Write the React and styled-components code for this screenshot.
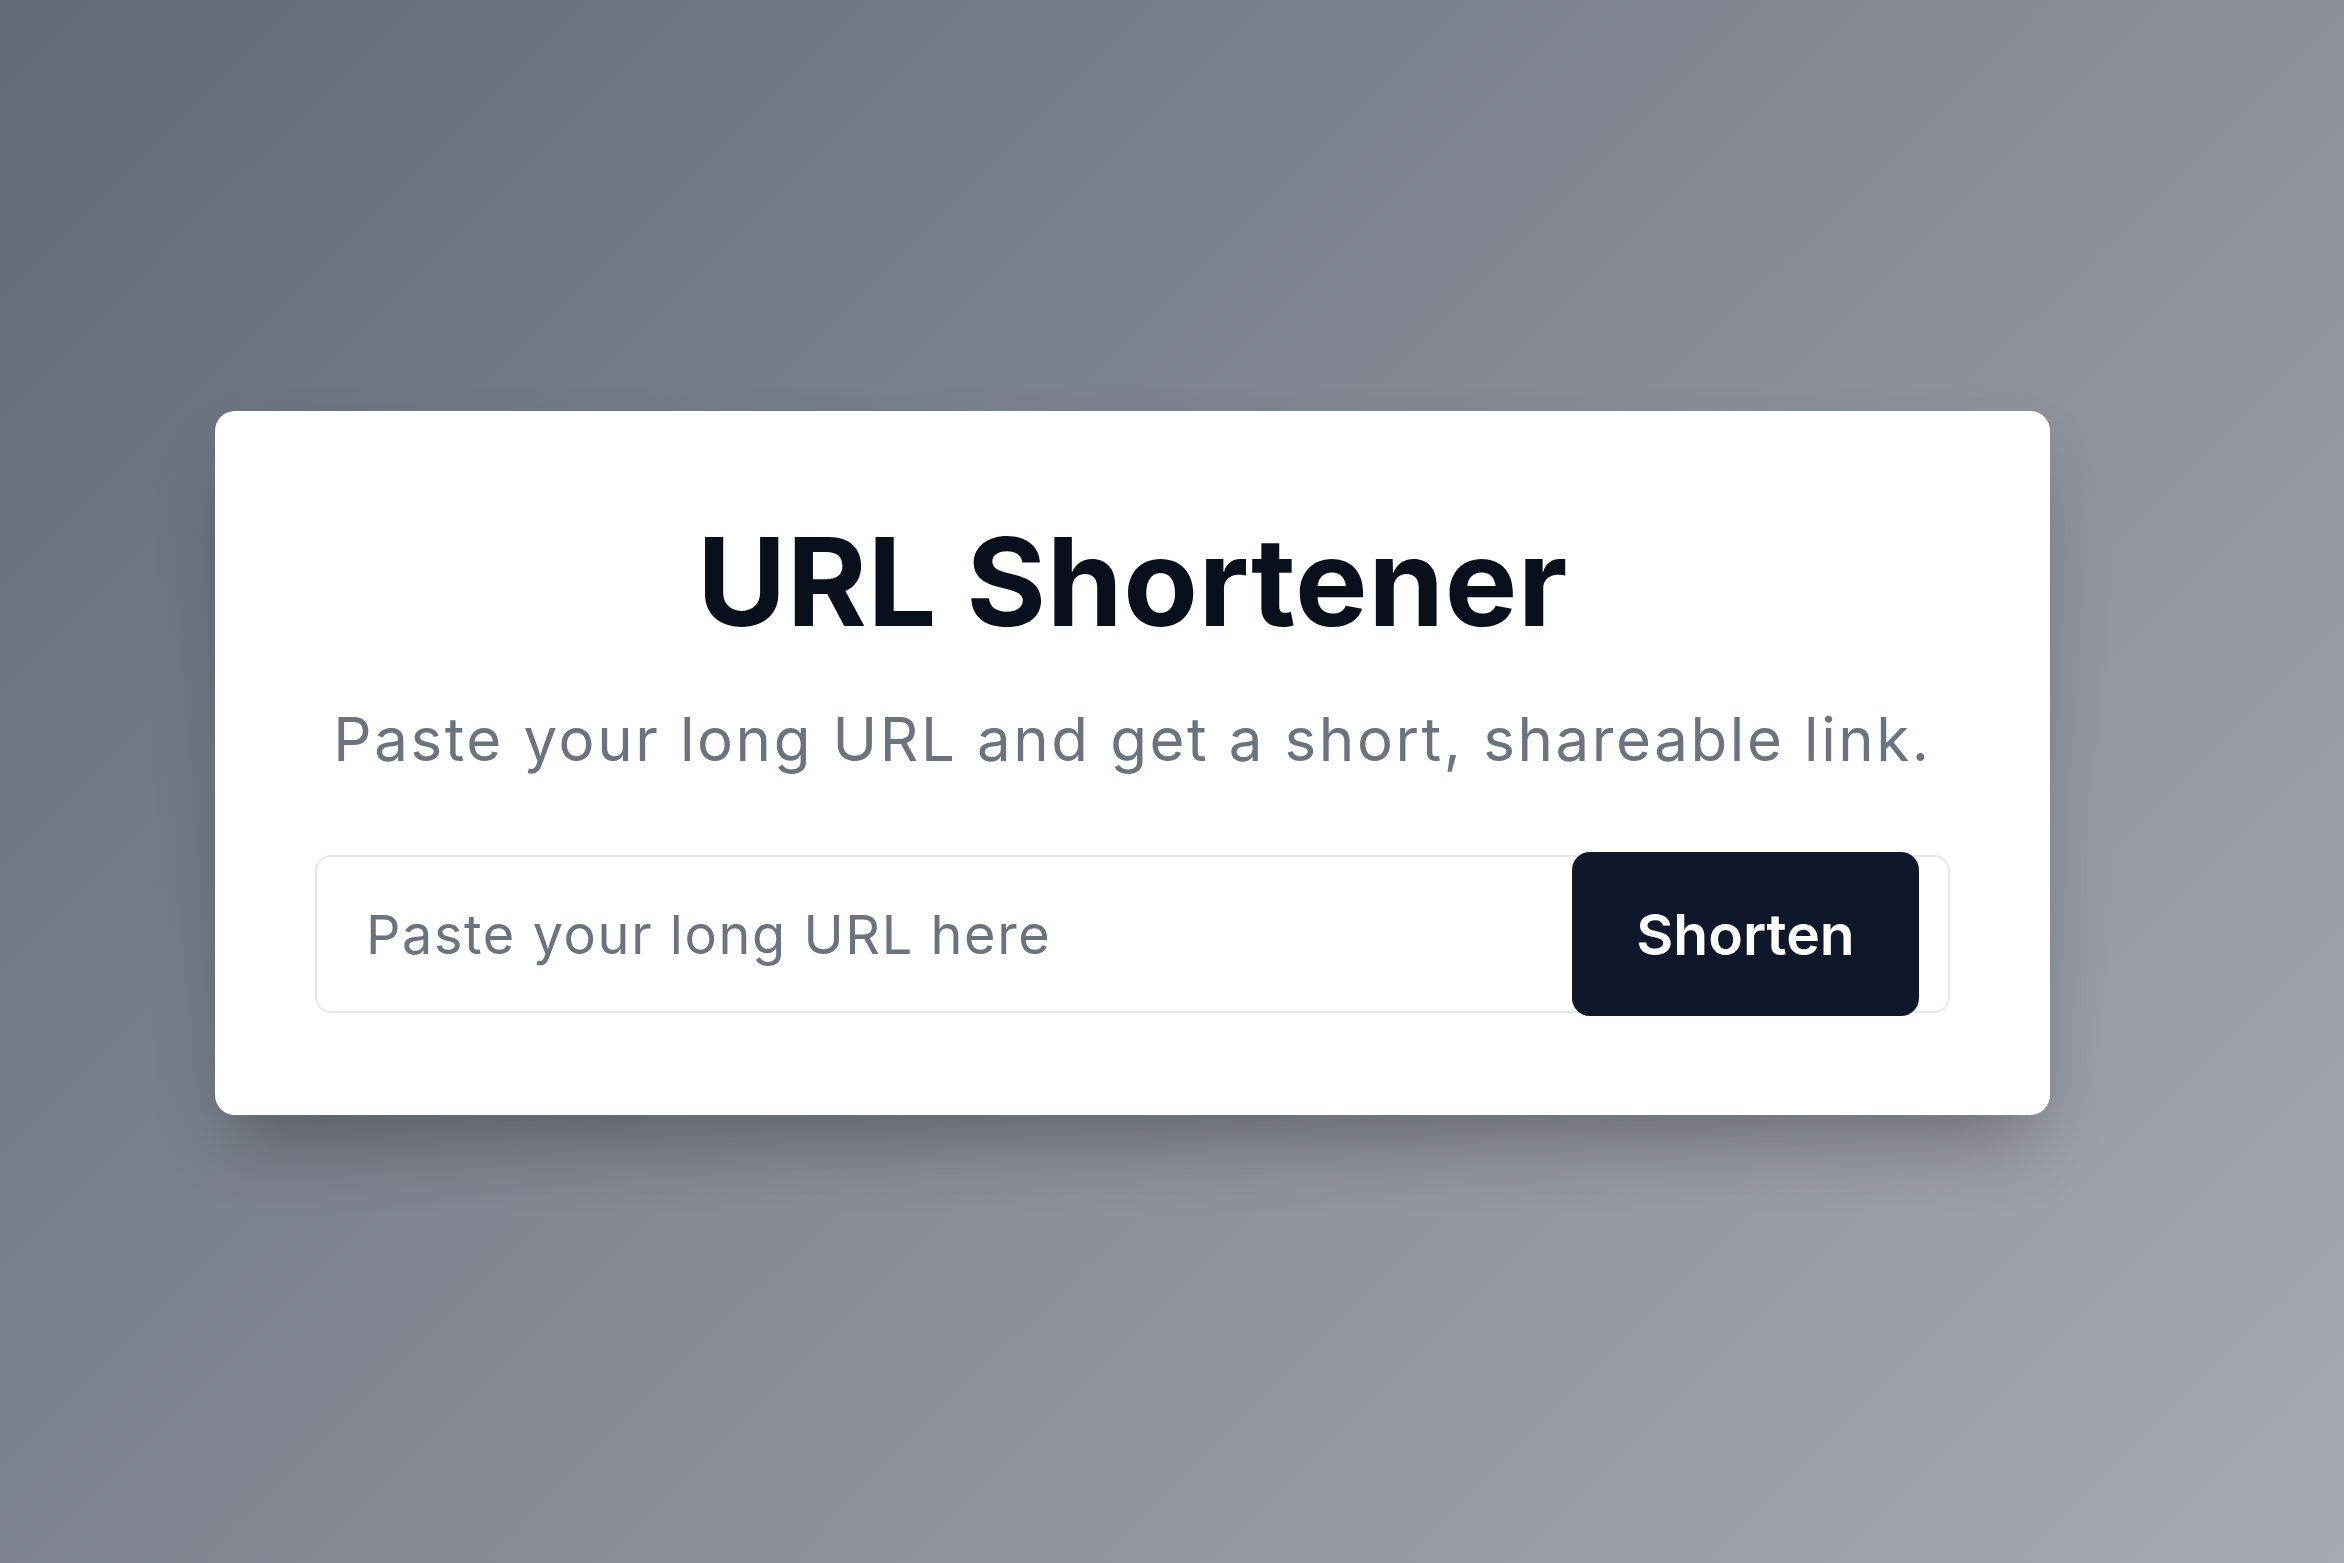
import React, { useState } from 'react';
import styled, { createGlobalStyle } from 'styled-components';

const GlobalStyle = createGlobalStyle`
  html, body {
    margin: 0;
    padding: 0;
  }
  body {
    font-family: Inter, "Noto Sans", "Liberation Sans", sans-serif;
  }
  * {
    box-sizing: border-box;
  }
`;

const Page = styled.div`
  min-height: 100vh;
  width: 100%;
  padding: 411px 0 0 215px;
  background: linear-gradient(135deg, #626977 0%, #858a95 50%, #a6aab2 100%);
`;

const Card = styled.div`
  width: 1835px;
  background: #ffffff;
  border-radius: 20px;
  padding: 97px 100px 102px;
  box-shadow: 0 38px 75px -18px rgba(0, 0, 0, 0.3);
  display: flex;
  flex-direction: column;
  align-items: center;
`;

const Title = styled.h1`
  margin: 0;
  font-size: 122px;
  font-weight: 700;
  line-height: 148px;
  color: #0a0f1c;
  letter-spacing: 0.5px;
`;

const Subtitle = styled.p`
  margin: 47px 0 0;
  font-size: 60px;
  line-height: 73px;
  color: #6b7280;
  letter-spacing: 2.6px;
`;

const Form = styled.form`
  margin-top: 79px;
  width: 100%;
  height: 158px;
  display: flex;
  align-items: center;
  border: 2px solid #e5e7eb;
  border-radius: 16px;
  padding-right: 29px;
`;

const Input = styled.input`
  flex: 1;
  min-width: 0;
  height: 100%;
  border: none;
  outline: none;
  background: transparent;
  padding: 0 0 0 49px;
  font-family: inherit;
  font-size: 54px;
  letter-spacing: 1.6px;
  color: #111827;

  &::placeholder {
    color: #6b7280;
  }
`;

const Button = styled.button`
  flex: none;
  width: 347px;
  height: 164px;
  border: none;
  border-radius: 18px;
  background: #0f172a;
  color: #ffffff;
  font-family: inherit;
  font-size: 57px;
  font-weight: 600;
  cursor: pointer;
`;

export default function App() {
  const [url, setUrl] = useState('');

  return (
    <>
      <GlobalStyle />
      <Page>
        <Card>
          <Title>URL Shortener</Title>
          <Subtitle>Paste your long URL and get a short, shareable link.</Subtitle>
          <Form onSubmit={(e) => e.preventDefault()}>
            <Input
              type="text"
              placeholder="Paste your long URL here"
              value={url}
              onChange={(e) => setUrl(e.target.value)}
            />
            <Button type="submit">Shorten</Button>
          </Form>
        </Card>
      </Page>
    </>
  );
}
